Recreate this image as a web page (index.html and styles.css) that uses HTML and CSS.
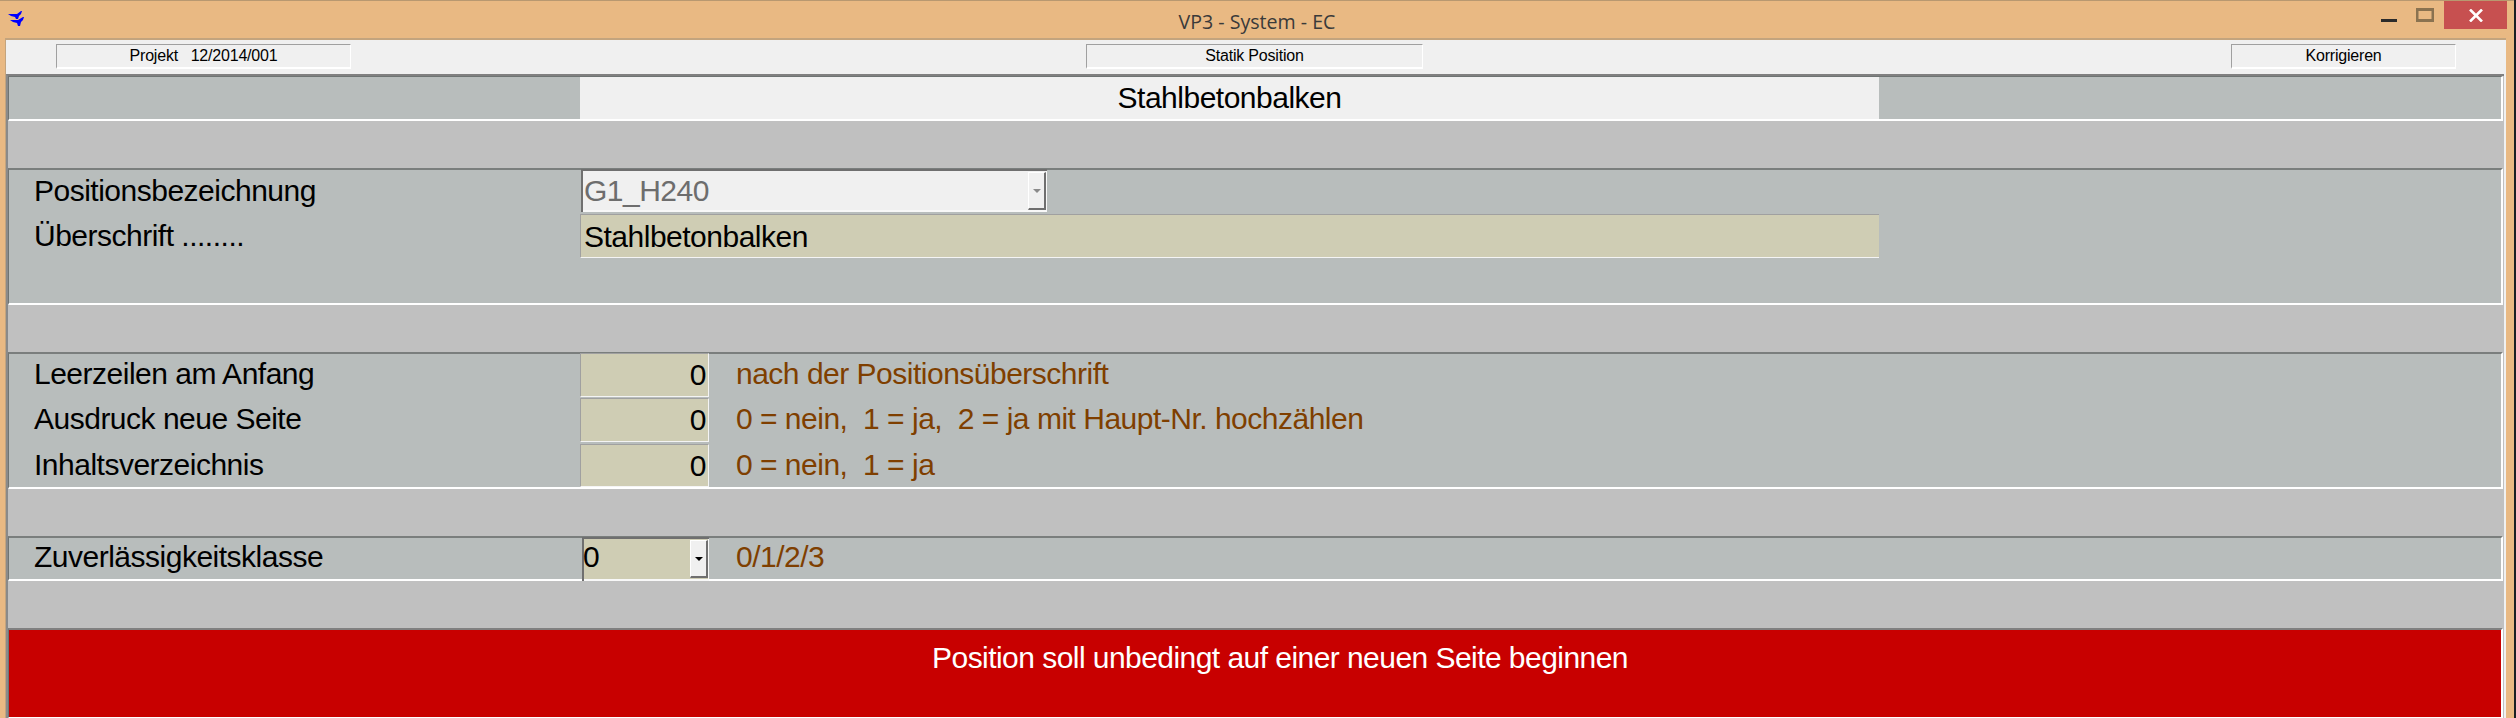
FILE: index.html
```html
<!DOCTYPE html>
<html lang="de">
<head>
<meta charset="utf-8">
<title>VP3 - System - EC</title>
<link rel="stylesheet" href="styles.css">
</head>
<body>
<div class="window">
  <header class="titlebar">
    <svg class="app-icon" width="18" height="17" viewBox="0 0 18 17"><path fill="#0000ff" d="M0 3h9l4-3h1l-1 3-2 2-1 3H8L7 6 3 5zM2 9h8l5-3h1l-1 3-2 2-1 4h-2L9 12l-4-1z"/></svg>
    <div class="title">VP3 - System - EC</div>
    <div class="controls">
      <svg class="ctl-min" width="16" height="3" viewBox="0 0 16 3"><rect width="16" height="3" fill="#2b2b2b"/></svg>
      <svg class="ctl-max" width="18" height="14" viewBox="0 0 18 14"><rect x="1" y="1.5" width="16" height="11" fill="none" stroke="#8a7250" stroke-width="3"/></svg>
      <div class="ctl-close"><svg width="14" height="13" viewBox="0 0 14 13"><path d="M1 0.5l12 12M13 0.5l-12 12" stroke="#fff" stroke-width="2.6" fill="none"/></svg></div>
    </div>
  </header>
  <div class="client">
    <div class="toolbar">
      <div class="tool tool-a">Projekt&nbsp;&nbsp; 12/2014/001</div>
      <div class="tool tool-b">Statik Position</div>
      <div class="tool tool-c">Korrigieren</div>
    </div>
    <div class="form">
      <section class="head-row">
        <div class="head-side"></div>
        <div class="head-title">Stahlbetonbalken</div>
        <div class="head-side grow"></div>
      </section>
      <div class="band"></div>
      <section class="panel p1">
        <div class="row">
          <div class="label">Positionsbezeichnung</div>
          <div class="combo combo-wide"><span class="combo-text muted">G1_H240</span><span class="combo-btn"><i class="arrow arrow-grey"></i></span></div>
        </div>
        <div class="row row-gap">
          <div class="label">Überschrift ........</div>
          <div class="field field-wide">Stahlbetonbalken</div>
        </div>
      </section>
      <div class="band"></div>
      <section class="panel p2">
        <div class="row">
          <div class="label">Leerzeilen am Anfang</div>
          <div class="field field-num">0</div>
          <div class="hint">nach der Positionsüberschrift</div>
        </div>
        <div class="row row-gap">
          <div class="label">Ausdruck neue Seite</div>
          <div class="field field-num">0</div>
          <div class="hint">0 = nein,&nbsp; 1 = ja,&nbsp; 2 = ja mit Haupt-Nr. hochzählen</div>
        </div>
        <div class="row row-last">
          <div class="label">Inhaltsverzeichnis</div>
          <div class="field field-num">0</div>
          <div class="hint">0 = nein,&nbsp; 1 = ja</div>
        </div>
      </section>
      <div class="band"></div>
      <section class="panel p3">
        <div class="row">
          <div class="label">Zuverlässigkeitsklasse</div>
          <div class="combo combo-small"><span class="combo-text">0</span><span class="combo-btn"><i class="arrow"></i></span></div>
          <div class="hint">0/1/2/3</div>
        </div>
      </section>
      <div class="band"></div>
      <section class="alert">Position soll unbedingt auf einer neuen Seite beginnen</section>
    </div>
  </div>
</div>
</body>
</html>
```
FILE: styles.css
```css
html, body { margin: 0; padding: 0; height: 718px; overflow: hidden; background: #1b2024; }
body { font-family: "Liberation Sans", Arial, sans-serif; color: #000; }
.window { width: 2514px; height: 718px; box-sizing: border-box; background: #e9b983; border-top: 1px solid #b89870; display: flex; flex-direction: column; }
.titlebar { height: 37px; flex: none; display: flex; align-items: flex-start; position: relative; }
.app-icon { margin: 10px 0 0 8px; }
.title { position: absolute; left: 0; right: 0; top: 8px; text-align: center; font-family: "Open Sans", sans-serif; font-size: 19.6px; line-height: 26px; color: #3a3a3a; }
.controls { margin-left: auto; margin-right: 7px; display: flex; align-items: flex-start; position: relative; }
.ctl-min { margin-top: 18px; }
.ctl-max { margin: 7px 0 0 19px; }
.ctl-close { width: 63px; height: 28px; margin-left: 10px; background: #c75050; display: flex; align-items: center; justify-content: center; }
.client { flex: 1; margin: 0 8px 0 5px; border-style: solid; border-color: #c3a47e; border-width: 2px 0 0 1px; background: #f0f0f0; display: flex; flex-direction: column; min-height: 0; }
.toolbar { height: 34px; flex: none; display: flex; align-items: flex-start; font-size: 16px; }
.tool { height: 25px; margin-top: 4px; box-sizing: border-box; border: 1px solid #a0a0a0; border-right-color: #fff; border-bottom: 2px solid #fff; text-align: center; line-height: 21px; letter-spacing: -0.2px; }
.tool-a { width: 295px; margin-left: 50px; }
.tool-b { width: 337px; margin-left: 735px; }
.tool-c { width: 225px; margin-left: 808px; }
.form { flex: 1; margin-right: 2px; background: #c0c0c0; display: flex; flex-direction: column; min-height: 0; border-top: 2px solid #808080; border-left: 2px solid #8a8a8a; font-size: 30px; letter-spacing: -0.5px; }
.form > section { border-left: 1px solid #6f7473; border-right: 2px solid #fff; margin-right: 1px; }
.head-row { height: 45px; box-sizing: border-box; flex: none; display: flex; border-top: 1px solid #6f7473; border-bottom: 2px solid #fff; background: #b8bdbc; }
.head-side { width: 571px; }
.head-side.grow { width: auto; flex: 1; }
.head-title { width: 1299px; background: #f0f0f0; text-align: center; line-height: 41px; }
.band { height: 47px; flex: none; }
.panel { flex: none; box-sizing: border-box; background: #b8bdbc; border-top: 2px solid #7a7e7d; border-bottom: 2px solid #fff; }
.p1 { height: 137px; }
.p2 { height: 137px; }
.p3 { height: 45px; }
.row { display: flex; height: 44px; }
.row:first-child { margin-top: -1px; }
.row-gap { margin-top: 1px; }
.row-last { margin-top: 2px; height: 43px; }
.label { width: 571px; flex: none; box-sizing: border-box; padding-left: 25px; line-height: 42px; white-space: nowrap; }
.p1 .label { line-height: 44px; }
.p3 .label { line-height: 40px; }
.field { box-sizing: border-box; background: #cfcdb4; border-left: 1px solid #a0a0a0; border-top: 1px solid #a0a0a0; border-bottom: 1px solid #f4f4f4; line-height: 41px; }
.field-wide { width: 1299px; padding-left: 3px; line-height: 43px; }
.field-num { width: 129px; text-align: right; padding-right: 2px; border-right: 1px solid #f4f4f4; }
.hint { margin-left: 27px; color: #7f3f00; line-height: 42px; white-space: nowrap; }
.p3 .hint { line-height: 40px; }
.combo { box-sizing: border-box; display: flex; height: 43px; background: #f0f0f0; box-shadow: inset 2px 2px 0 #6f6f6f, inset -1px -2px 0 #f8f8f8; }
.combo-wide { width: 466px; margin-left: 1px; }
.combo-small { width: 127px; height: 44px; margin-left: 2px; background: #cfcdb4; }
.combo-text { flex: 1; padding-left: 3px; line-height: 44px; }
.combo-small .combo-text { padding-left: 1px; line-height: 40px; }
.muted { color: #6d6d6d; }
.combo-btn { flex: none; width: 18px; height: 38px; margin: 3px 1px 0 0; box-sizing: border-box; background: #f0f0f0; border: 1px solid #fff; border-right: 2px solid #6f6f6f; border-bottom: 2px solid #6f6f6f; display: flex; align-items: center; justify-content: center; }
.arrow { width: 0; height: 0; border: 4px solid transparent; border-top: 4px solid #000; border-bottom: 0; }
.arrow-grey { border-top-color: #8a8a8a; }
.alert { flex: 1; min-height: 0; box-sizing: border-box; background: #c80000; border-top: 2px solid #808080; color: #fff; text-align: center; line-height: 56px; border-bottom: 1px solid #fff; padding-left: 50px; letter-spacing: -0.55px; }
```
